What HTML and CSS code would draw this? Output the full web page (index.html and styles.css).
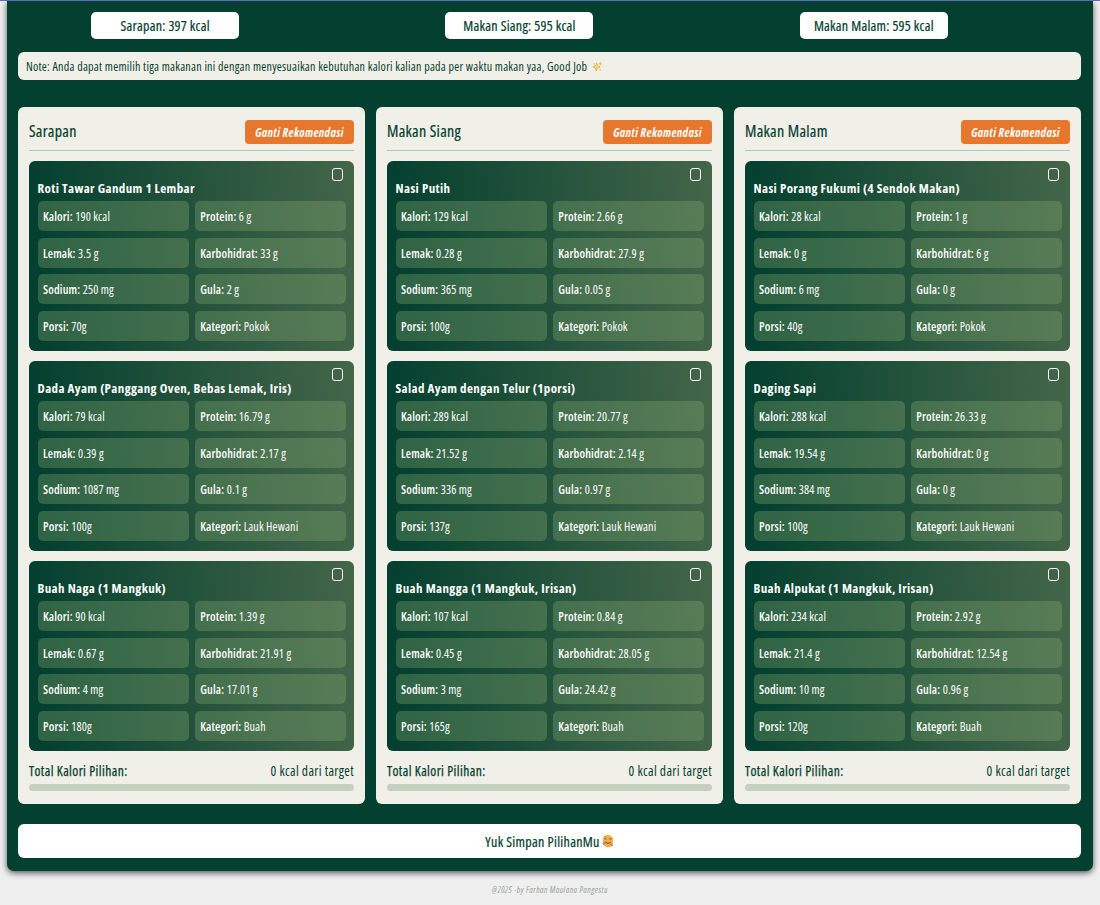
FILE: index.html
```html
<!DOCTYPE html>
<html lang="id">
<head>
    <meta charset="UTF-8">
    <meta name="viewport" content="width=device-width, initial-scale=1.0">
    <title>Rekomendasi Makanan</title>
    <link rel="stylesheet" href="styles.css">
</head>
<body>
    <main class="container">
        <div class="targets">
            <div class="target">Sarapan: 397 kcal</div>
            <div class="target">Makan Siang: 595 kcal</div>
            <div class="target">Makan Malam: 595 kcal</div>
        </div>

        <div class="note">
            <span>Note: Anda dapat memilih tiga makanan ini dengan menyesuaikan kebutuhan kalori kalian pada per waktu makan yaa, Good Job</span>
            <svg class="sparkle" viewBox="0 0 12 12">
                <path d="M5 2 L6.1 5 L9 6.5 L6 7.4 L4.5 10.8 L3.7 7.6 L1 6.5 L3.8 5.2 Z" fill="#f7dc8c" stroke="#e3b23c" stroke-width="1"/>
                <path d="M9 0.5 L9.6 2.3 L11.2 3 L9.6 3.6 L9 5.2 L8.3 3.6 L7 3 L8.4 2.3 Z" fill="#e9b949"/>
                <circle cx="9" cy="9.5" r="0.9" fill="#e9b949"/>
                <circle cx="2.4" cy="3" r="0.8" fill="#e9b949"/>
            </svg>
        </div>

        <!-- Meal columns are filled from the meals array -->
        <div class="meals" id="meals"></div>

        <button class="save-btn">
            <span>Yuk Simpan PilihanMu</span>
            <svg class="smile" viewBox="0 0 12 14" preserveAspectRatio="none">
                <ellipse cx="6" cy="7" rx="5.2" ry="6.3" fill="#f2b04f"/>
                <path d="M2.3 5.3 Q3.4 3.7 4.5 5.3 M7.3 5.3 Q8.4 3.7 9.5 5.3" fill="none" stroke="#6b4423" stroke-width="1"/>
                <path d="M3.2 8 Q6 11 8.8 8" fill="none" stroke="#6b4423" stroke-width="1"/>
                <circle cx="2" cy="9.7" r="1.4" fill="#ea7a45"/>
                <circle cx="9.6" cy="11" r="1.4" fill="#ea7a45"/>
                <circle cx="2.6" cy="2.8" r="1" fill="#ea8a4a"/>
            </svg>
        </button>
    </main>

    <footer>@2025 -by Farhan Maulana Pangestu</footer>

    <script>
        const labels = ["Kalori", "Protein", "Lemak", "Karbohidrat", "Sodium", "Gula", "Porsi", "Kategori"];

        const meals = [
            { title: "Sarapan", foods: [
                { name: "Roti Tawar Gandum 1 Lembar", values: ["190 kcal", "6 g", "3.5 g", "33 g", "250 mg", "2 g", "70g", "Pokok"] },
                { name: "Dada Ayam (Panggang Oven, Bebas Lemak, Iris)", values: ["79 kcal", "16.79 g", "0.39 g", "2.17 g", "1087 mg", "0.1 g", "100g", "Lauk Hewani"] },
                { name: "Buah Naga (1 Mangkuk)", values: ["90 kcal", "1.39 g", "0.67 g", "21.91 g", "4 mg", "17.01 g", "180g", "Buah"] }
            ] },
            { title: "Makan Siang", foods: [
                { name: "Nasi Putih", values: ["129 kcal", "2.66 g", "0.28 g", "27.9 g", "365 mg", "0.05 g", "100g", "Pokok"] },
                { name: "Salad Ayam dengan Telur (1porsi)", values: ["289 kcal", "20.77 g", "21.52 g", "2.14 g", "336 mg", "0.97 g", "137g", "Lauk Hewani"] },
                { name: "Buah Mangga (1 Mangkuk, Irisan)", values: ["107 kcal", "0.84 g", "0.45 g", "28.05 g", "3 mg", "24.42 g", "165g", "Buah"] }
            ] },
            { title: "Makan Malam", foods: [
                { name: "Nasi Porang Fukumi (4 Sendok Makan)", values: ["28 kcal", "1 g", "0 g", "6 g", "6 mg", "0 g", "40g", "Pokok"] },
                { name: "Daging Sapi", values: ["288 kcal", "26.33 g", "19.54 g", "0 g", "384 mg", "0 g", "100g", "Lauk Hewani"] },
                { name: "Buah Alpukat (1 Mangkuk, Irisan)", values: ["234 kcal", "2.92 g", "21.4 g", "12.54 g", "10 mg", "0.96 g", "120g", "Buah"] }
            ] }
        ];

        function foodCard(food) {
            const cells = food.values.map((value, i) =>
                `<div class="nutrient"><strong>${labels[i]}:</strong> ${value}</div>`).join('');
            return `
                <article class="food">
                    <input type="checkbox" class="food-check">
                    <h3>${food.name}</h3>
                    <div class="nutrients">${cells}</div>
                </article>`;
        }

        // One column per meal, three foods in each
        document.getElementById('meals').innerHTML = meals.map(meal => `
            <section class="meal">
                <div class="meal-header">
                    <h2>${meal.title}</h2>
                    <button class="change-btn">Ganti Rekomendasi</button>
                </div>
                ${meal.foods.map(foodCard).join('')}
                <div class="total">
                    <span class="total-label">Total Kalori Pilihan:</span>
                    <span class="total-value">0 kcal dari target</span>
                </div>
                <div class="progress"></div>
            </section>`).join('');
    </script>
</body>
</html>
```
FILE: styles.css
```css
* {
    box-sizing: border-box;
}

body {
    margin: 0;
    height: 905px;
    overflow: hidden;
    font-family: 'Open Sans', 'Noto Sans', sans-serif;
    font-stretch: 75%;
    color: #04402f;
    background-color: #efefef;
    border-top: 1px solid #5c6bc0;
}

.container {
    margin: 0 7px;
    height: 870px;
    padding: 11px 12px 13px 11px;
    background-color: #04402f;
    border-radius: 0 0 7px 7px;
    box-shadow: 0 2px 6px rgba(0, 0, 0, 0.65);
}

.targets {
    display: grid;
    grid-template-columns: repeat(3, 1fr);
    justify-items: center;
}

.target {
    width: 148px;
    height: 27px;
    margin-right: 60px;
    line-height: 27px;
    text-align: center;
    font-size: 14px;
    font-weight: 500;
    letter-spacing: 0.25px;
    -webkit-text-stroke: 0.2px #04402f;
    background-color: #fff;
    border-radius: 5px;
}

.note {
    display: flex;
    align-items: center;
    gap: 5px;
    height: 28px;
    margin-top: 13px;
    padding: 0 8px;
    font-size: 12px;
    letter-spacing: 0.26px;
    white-space: nowrap;
    background-color: #f1f0e8;
    border-radius: 6px;
}

.sparkle {
    width: 11px;
    height: 11px;
}

.meals {
    display: grid;
    grid-template-columns: repeat(3, 1fr);
    gap: 11px;
    margin-top: 27px;
}

.meal {
    height: 697px;
    padding: 13px 11px 0 11px;
    background-color: #f1f0e8;
    border-radius: 6px;
}

.meal-header {
    display: flex;
    justify-content: space-between;
    height: 31px;
    border-bottom: 1px solid #a3cfb4;
    margin-bottom: 10px;
}

.meal-header h2 {
    margin: 0;
    font-size: 16px;
    font-weight: 500;
    letter-spacing: 0.3px;
    line-height: 23px;
    -webkit-text-stroke: 0.2px #04402f;
}

.change-btn {
    width: 109px;
    height: 24px;
    padding: 0;
    border: none;
    border-radius: 4px;
    background-color: #e8772e;
    color: #fff;
    font-family: inherit;
    font-stretch: inherit;
    font-size: 12px;
    font-weight: 700;
    font-style: italic;
    letter-spacing: 0.35px;
}

.food {
    position: relative;
    height: 190px;
    margin-bottom: 10px;
    padding: 18px 8px 0 8.5px;
    color: #fff;
    background: linear-gradient(85deg, #04402f 5%, #446649);
    border-radius: 6px;
}

.food h3 {
    margin: 0;
    font-size: 13px;
    font-weight: 700;
    letter-spacing: 0.38px;
    line-height: 19px;
    white-space: nowrap;
}

.food-check {
    appearance: none;
    position: absolute;
    top: 7px;
    right: 11.5px;
    width: 11px;
    height: 13px;
    margin: 0;
    border: 1px solid #fff;
    border-radius: 3px;
}

.nutrients {
    display: grid;
    grid-template-columns: repeat(2, 1fr);
    gap: 6.6px 6px;
    margin-top: 3px;
}

.nutrient {
    height: 30px;
    padding-left: 5.5px;
    line-height: 31px;
    font-size: 12px;
    letter-spacing: 0.15px;
    white-space: nowrap;
    background-color: rgba(136, 172, 116, 0.33);
    border-radius: 5px;
}

.nutrient strong {
    font-weight: 600;
}

.total {
    display: flex;
    justify-content: space-between;
    height: 23px;
    font-size: 13.5px;
    letter-spacing: 0.35px;
    line-height: 21px;
}

.total-label {
    font-weight: 500;
    letter-spacing: 0.42px;
    -webkit-text-stroke: 0.25px #04402f;
}

.progress {
    height: 7px;
    background-color: #c6d0bf;
    border-radius: 4px;
}

.save-btn {
    display: flex;
    align-items: center;
    justify-content: center;
    gap: 2px;
    width: 100%;
    height: 34px;
    margin-top: 20px;
    border: none;
    border-radius: 6px;
    background-color: #fff;
    color: #04402f;
    font-family: inherit;
    font-stretch: inherit;
    font-size: 14px;
    font-weight: 500;
    letter-spacing: 0.3px;
    -webkit-text-stroke: 0.2px #04402f;
}

.smile {
    width: 12px;
    height: 14px;
    -webkit-text-stroke: 0;
}

footer {
    margin-top: 13px;
    text-align: center;
    font-size: 8.5px;
    letter-spacing: 0.45px;
    line-height: 12px;
    font-style: italic;
    color: #9a9f9b;
}
```
